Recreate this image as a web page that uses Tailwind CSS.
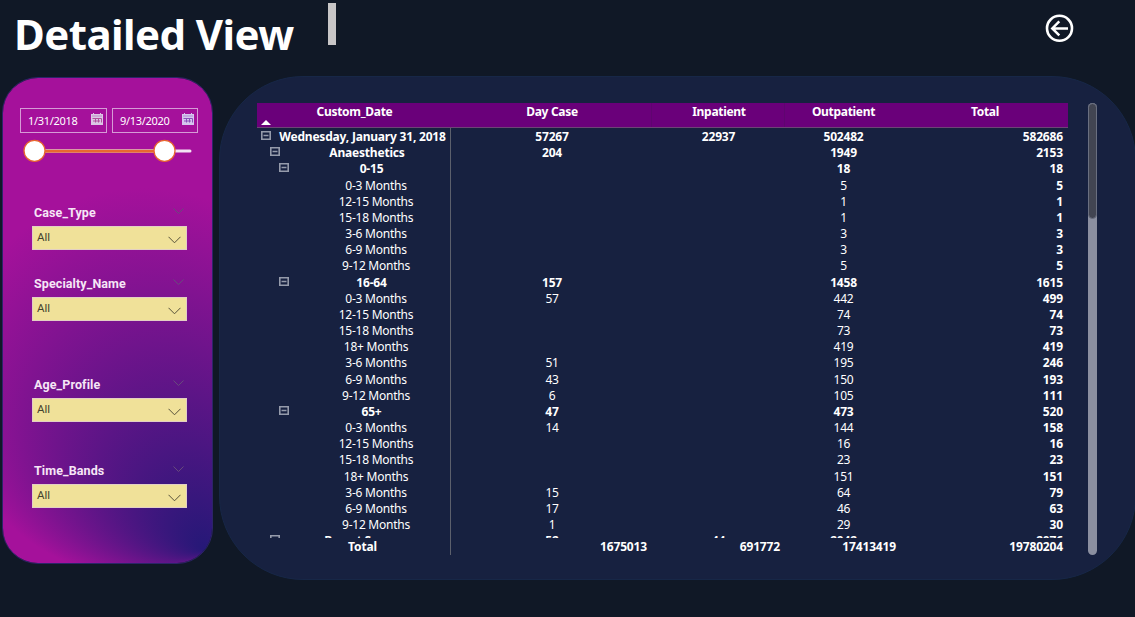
<!DOCTYPE html>
<html lang="en">
<head>
<meta charset="utf-8">
<title>Detailed View</title>
<script src="https://cdn.jsdelivr.net/npm/@tailwindcss/browser@4"></script>
</head>
<body class="h-[617px] w-[1135px] overflow-hidden bg-[#101826] font-['Noto_Sans',sans-serif] text-white">
<header class="flex h-[76px] items-start">
  <h1 class="ml-[14px] mt-[5px] w-[314px] whitespace-nowrap text-[42px] leading-[58px] font-bold tracking-[-0.55px]">Detailed View</h1>
  <div class="mt-[3px] h-[42px] w-2 bg-[#c8c6c7]"></div>
  <svg class="ml-[709px] mt-[14px]" width="29" height="29" viewBox="0 0 29 29" fill="none" stroke="#fff"><circle cx="14.5" cy="14.3" r="12.5" stroke-width="2.6"/><path d="M23 14.4H7.5M14.3 7.4l-7 7 7 7" stroke-width="2.5"/></svg>
</header>
<main class="flex items-start">
  <aside class="relative isolate ml-[2px] mt-px h-[487px] w-[211px] shrink-0 overflow-hidden rounded-[36px] border border-[#2c2469]">
    <svg class="absolute inset-0 -z-10" width="211" height="487">
      <defs><radialGradient id="glow" gradientUnits="userSpaceOnUse" cx="140" cy="305" r="195" fx="202" fy="472">
        <stop offset="0" stop-color="#251877"/><stop offset="1" stop-color="#a5119b"/>
      </radialGradient></defs>
      <rect width="211" height="487" fill="url(#glow)"/>
    </svg>
    <div class="ml-[17px] mt-[30px] flex gap-[5px] text-[11px]">
      <div class="flex h-[25px] w-[87px] items-center justify-between border border-[#d69bd6] pl-[7px] pr-[3px]"><span class="pt-px tracking-[-0.3px]">1/31/2018</span>
        <svg class="-mt-[3px]" width="12" height="12" viewBox="0 0 12 12"><path d="M0 1h12v11H0z" fill="#dbc6e5"/><path d="M1 3h10" stroke="#b878bd" stroke-width=".8"/><path d="M2.5 0v1.5M9.500 0v1.5" stroke="#dbc6e5"/><path d="M1.500 5.500h9v4M2 8h7M4.500 5.500v4M7.500 5.500v4" fill="none" stroke="#b0509c"/></svg></div>
      <div class="flex h-[25px] w-[86px] items-center justify-between border border-[#d69bd6] pl-[7px] pr-[3px]"><span class="pt-px tracking-[-0.3px]">9/13/2020</span>
        <svg class="-mt-[3px]" width="12" height="12" viewBox="0 0 12 12"><path d="M0 1h12v11H0z" fill="#d5c6ee"/><path d="M1 3h10" stroke="#a878cd" stroke-width=".8"/><path d="M2.500 0v1.500M9.500 0v1.500" stroke="#d5c6ee"/><path d="M1.500 5.500h9v4M2 8h7M4.500 5.500v4M7.500 5.500v4" fill="none" stroke="#8a50bb"/></svg></div>
    </div>
    <svg class="ml-[19px] mt-[5px]" width="175" height="26" viewBox="0 0 175 26"><path d="M12 13H168" stroke="#f3e3f3" stroke-width="3" stroke-linecap="round"/><path d="M12 13H142" stroke="#d99aa5" stroke-width="4"/><path d="M12 13.200H142" stroke="#e8662f" stroke-width="2.600"/><circle cx="12.500" cy="12.800" r="10.500" fill="#fff" stroke="#e8662f" stroke-width="1.300"/><circle cx="142.500" cy="12.800" r="10.500" fill="#fff" stroke="#e8662f" stroke-width="1.300"/></svg>
    <div id="slicers"></div>
  </aside>
  <section class="ml-[6px] h-[504px] w-[917px] shrink-0 rounded-[84px] border border-[#172747] bg-[#172140] pl-[37px] pt-[26px]">
    <div class="flex">
      <div class="w-[811px] text-[12px]">
        <div class="grid h-[25px] grid-cols-[194px_201px_133px_117px_166px] border-b border-[#6c4475] bg-[#6a007a] text-center leading-[18px] font-bold tracking-[-0.3px]">
          <div class="relative pl-px">Custom_Date<svg class="absolute left-1 top-[17px]" width="10" height="5"><path d="M0 5 5 0l5 5z" fill="#fff"/></svg></div>
          <div class="border-r border-[#5f0570] pl-[2px]">Day Case</div>
          <div class="border-r border-[#5f0570] pl-[2px]">Inpatient</div>
          <div>Outpatient</div>
          <div>Total</div>
        </div>
        <div class="relative h-[427px]">
          <div class="absolute left-[193px] top-0 h-full w-px bg-[#5c606c]"></div>
          <div id="rows" class="h-[410px] overflow-hidden"></div>
          <div class="grid h-[17px] grid-cols-[194px_201px_133px_117px_166px] text-right leading-[18px] font-bold tracking-[-0.15px]">
            <div class="pl-[17px] text-center">Total</div>
            <div class="pr-[5px]">1675013</div><div class="pr-[5px]">691772</div><div class="pr-[6px]">17413419</div><div class="pr-[5px]">19780204</div>
          </div>
        </div>
      </div>
      <div class="ml-[20px] h-[452px] w-[9px] rounded-full bg-[#8b8fa0]">
        <div class="h-[116px] rounded-full border border-[#6a6f80] bg-[#424552]"></div>
      </div>
    </div>
  </section>
</main>
<script>
const rows = [
  [0,'Wednesday, January 31, 2018','57267','22937','502482','582686'],
  [1,'Anaesthetics','204','','1949','2153'],
  [2,'0-15','','','18','18'],
  [3,'0-3 Months','','','5','5'],
  [3,'12-15 Months','','','1','1'],
  [3,'15-18 Months','','','1','1'],
  [3,'3-6 Months','','','3','3'],
  [3,'6-9 Months','','','3','3'],
  [3,'9-12 Months','','','5','5'],
  [2,'16-64','157','','1458','1615'],
  [3,'0-3 Months','57','','442','499'],
  [3,'12-15 Months','','','74','74'],
  [3,'15-18 Months','','','73','73'],
  [3,'18+ Months','','','419','419'],
  [3,'3-6 Months','51','','195','246'],
  [3,'6-9 Months','43','','150','193'],
  [3,'9-12 Months','6','','105','111'],
  [2,'65+','47','','473','520'],
  [3,'0-3 Months','14','','144','158'],
  [3,'12-15 Months','','','16','16'],
  [3,'15-18 Months','','','23','23'],
  [3,'18+ Months','','','151','151'],
  [3,'3-6 Months','15','','64','79'],
  [3,'6-9 Months','17','','46','63'],
  [3,'9-12 Months','1','','29','30'],
  [1,'Breast Surgery','52','44','2042','2076']
];
const indent = ['pl-[22px]','pl-[31px]','pl-[40px]','pl-[49px]'];
const iconLeft = ['left-[4px]','left-[13px]','left-[22px]'];
const toggle = l => `<svg class="absolute top-[3px] ${iconLeft[l]}" width="10" height="9"><path d="M.8.8h8.400v7.400H.800zM2.500 4.500h5" fill="none" stroke="#959bab" stroke-width="1.600"/></svg>`;
document.getElementById('rows').innerHTML = rows.map(([l,n,a,b,c,t]) =>
  `<div class="grid h-[16.18px] grid-cols-[194px_201px_133px_117px_166px] text-center leading-[17px] ${l < 3 ? 'font-bold tracking-[-0.2px]' : 'font-normal tracking-[-0.25px]'}">
    <div class="relative whitespace-nowrap pr-[5px] ${indent[l]}">${l < 3 ? toggle(l) : ''}${n}</div>
    <div class="pl-px">${a}</div><div>${b}</div><div>${c}</div><div class="pr-[5px] text-right font-bold tracking-[-0.15px]">${t}</div>
  </div>`).join('');
const slicers = [['Case_Type','mt-[39px]'],['Specialty_Name','mt-[24px]'],['Age_Profile','mt-[54px]'],['Time_Bands','mt-[39px]']];
document.getElementById('slicers').innerHTML = slicers.map(([n,m]) =>
  `<div class="ml-[29px] w-[155px] font-[Roboto,sans-serif] ${m}">
    <div class="flex h-[23px] justify-between pl-[2px] pr-[3px]"><span class="text-[12.5px] leading-[20px] font-bold tracking-[0.1px] text-[#f6e6f6]">${n}</span>
    <svg class="mt-[5px]" width="11" height="7" fill="none" stroke="#684a7c"><path d="m.5.5 5 5 5-5"/></svg></div>
    <div class="flex h-6 items-center justify-between border border-[#e3cfc4] bg-[#f0e199] pl-1 pr-[5px] text-[11.5px] text-[#45422e]"><span>All</span>
    <svg class="mt-[3px]" width="13" height="8" fill="none" stroke="#57523a"><path d="m.5.8 6 6 6-6"/></svg></div>
  </div>`).join('');
</script>
</body>
</html>
